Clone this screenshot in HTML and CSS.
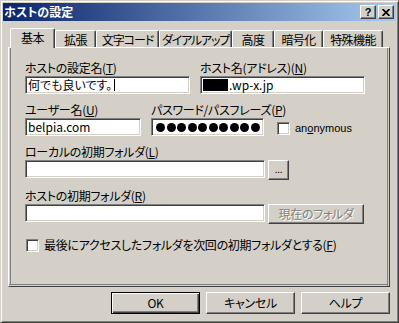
FILE: index.html
```html
<!DOCTYPE html>
<html lang="ja">
<head>
  <meta charset="UTF-8">
  <title>ホストの設定</title>
  <link rel="stylesheet" href="styles.css">
</head>
<body>

<div class="window">
  <div class="titlebar">
    <span class="title">ホストの設定</span>
    <div class="caption">
      <span class="cap-btn">?</span>
      <span class="cap-btn">
        <svg width="8" height="7" viewBox="0 0 8 7"><path d="M0.5 0 L7.5 7 M7.5 0 L0.5 7" stroke="#000" stroke-width="1.7"/></svg>
      </span>
    </div>
  </div>

  <div class="dialog">
    <!-- Tabs -->
    <div class="tabs">
      <div class="tab active">基本</div>
      <div class="tab">拡張</div>
      <div class="tab">文字コード</div>
      <div class="tab">ダイアルアップ</div>
      <div class="tab">高度</div>
      <div class="tab">暗号化</div>
      <div class="tab">特殊機能</div>
    </div>

    <div class="panel">
      <div class="row">
        <div class="field w-half">
          <label>ホストの設定名(<u>T</u>)</label>
          <div class="edit">何でも良いです。<span class="caret"></span></div>
        </div>
        <div class="field w-half gap">
          <label>ホスト名(アドレス)(<u>N</u>)</label>
          <div class="edit"><span class="masked"></span>.wp-x.jp</div>
        </div>
      </div>

      <div class="row spaced">
        <div class="field w-user">
          <label>ユーザー名(<u>U</u>)</label>
          <div class="edit">belpia.com</div>
        </div>
        <div class="field w-pass gap">
          <label>パスワード/パスフレーズ(<u>P</u>)</label>
          <div class="edit dots">
            <i></i><i></i><i></i><i></i><i></i><i></i><i></i><i></i><i></i><i></i>
          </div>
        </div>
        <div class="check anon">
          <span class="box"></span>
          <span>an<u>o</u>nymous</span>
        </div>
      </div>

      <div class="field spaced">
        <label>ローカルの初期フォルダ(<u>L</u>)</label>
        <div class="line">
          <div class="edit w-wide"></div>
          <div class="btn small">...</div>
        </div>
      </div>

      <div class="field spaced">
        <label>ホストの初期フォルダ(<u>R</u>)</label>
        <div class="line">
          <div class="edit w-wide"></div>
          <div class="btn current disabled">現在のフォルダ</div>
        </div>
      </div>

      <div class="check last">
        <span class="box"></span>
        <span>最後にアクセスしたフォルダを次回の初期フォルダとする(<u>F</u>)</span>
      </div>
    </div>

    <div class="buttons">
      <div class="btn dlg default">OK</div>
      <div class="btn dlg">キャンセル</div>
      <div class="btn dlg">ヘルプ</div>
    </div>
  </div>
</div>

</body>
</html>
```

FILE: styles.css
```css
* { margin: 0; padding: 0; box-sizing: border-box; }
body {
  font-family: "Noto Sans CJK JP", "Noto Sans", sans-serif;
  font-size: 12px;
  line-height: 14px;
  font-feature-settings: "palt";
  letter-spacing: -0.3px;
  color: #000;
  background: #d4d0c8;
  white-space: nowrap;
}

.window {
  width: 399px;
  height: 323px;
  background: #d4d0c8;
  border: 1px solid;
  border-color: #d4d0c8 #404040 #404040 #d4d0c8;
  box-shadow: inset 1px 1px #fff, inset -1px -1px #808080;
  padding: 2px;
}

/* title bar */
.titlebar {
  height: 18px;
  background: linear-gradient(to right, #0a246a, #a6caf0);
  display: flex;
  align-items: center;
  justify-content: space-between;
  padding: 0 2px 0 1px;
}
.title { color: #fff; font-weight: bold; letter-spacing: 0; }
.caption { display: flex; gap: 2px; }
.cap-btn {
  width: 16px; height: 14px;
  background: #d4d0c8;
  border: 1px solid;
  border-color: #fff #404040 #404040 #fff;
  box-shadow: inset -1px -1px #808080;
  display: flex; align-items: center; justify-content: center;
  font-family: "Liberation Sans", sans-serif;
  font-weight: bold; font-size: 11px;
}

.dialog { padding: 7px 6px 0 5px; }

/* tabs */
.tabs {
  display: flex;
  align-items: flex-end;
  height: 19px;
  padding-left: 2px;
  position: relative;
  z-index: 1;
}
.tab {
  height: 17px;
  padding-top: 2px;
  text-align: center;
  border: 1px solid;
  border-bottom: none;
  border-color: #fff #404040 #404040 #fff;
  border-radius: 2px 2px 0 0;
  box-shadow: inset -1px 0 #808080;
  background: #d4d0c8;
  letter-spacing: -0.6px;
  overflow: hidden;
}
.tab.active { height: 20px; margin-bottom: -1px; padding-top: 2px; }
.tab:nth-child(1) { width: 45px; }
.tab:nth-child(2) { width: 41px; }
.tab:nth-child(3) { width: 63px; letter-spacing: -1px; }
.tab:nth-child(4) { width: 73px; letter-spacing: -1.2px; }
.tab:nth-child(5) { width: 42px; }
.tab:nth-child(6) { width: 49px; }
.tab:nth-child(7) { width: 60px; }

.panel {
  width: 382px;
  height: 240px;
  border: 1px solid;
  border-color: #fff #404040 #404040 #fff;
  box-shadow:
    inset -1px 0 #d4d0c8, inset -2px 0 #808080,
    inset 0 -1px #d4d0c8, inset 0 -2px #808080,
    inset 1px 0 #d4d0c8, inset 2px 0 #808080;
  padding: 13px 0 0 16px;
}

/* form */
.row { display: flex; align-items: flex-end; }
.spaced { margin-top: 9px; }
.field label { display: block; height: 14px; margin-bottom: 1px; }
.gap { margin-left: 10px; }
.w-half { width: 165px; }
.w-user { width: 116px; }
.w-pass { width: 113px; }
.w-wide { width: 240px; }

.edit {
  height: 18px;
  background: #fff;
  border: 1px solid;
  border-color: #808080 #fff #fff #808080;
  box-shadow: inset 1px 1px #404040, inset -1px -1px #d4d0c8;
  padding: 0 2px;
  line-height: 16px;
  display: flex;
  align-items: center;
  letter-spacing: 0;
}
.caret { width: 1px; height: 12px; background: #000; margin-left: 2px; }
.masked { width: 25px; height: 12px; background: #000; margin-right: 1px; }
.dots { gap: 1.5px; padding-left: 4px; }
.dots i { width: 9px; height: 9px; border-radius: 50%; background: #000; }

.line { display: flex; align-items: flex-start; gap: 3px; }

.check { display: flex; align-items: center; gap: 5px; }
.box {
  width: 13px; height: 13px;
  background: #fff;
  border: 1px solid;
  border-color: #808080 #fff #fff #808080;
  box-shadow: inset 1px 1px #404040, inset -1px -1px #d4d0c8;
}
.anon { margin-left: 13px; margin-bottom: 1px; font-family: "Liberation Sans", sans-serif; font-size: 11px; letter-spacing: 0; }
.last { margin-top: 14px; margin-left: 1px; }

/* buttons */
.btn {
  background: #d4d0c8;
  border: 1px solid;
  border-color: #fff #404040 #404040 #fff;
  box-shadow: inset -1px -1px #808080;
  display: flex; align-items: center; justify-content: center;
}
.btn.small { width: 21px; height: 20px; font-size: 10px; padding-bottom: 3px; }
.btn.current { width: 96px; height: 20px; }
.btn.disabled { color: #808080; text-shadow: 1px 1px #fff; }

.buttons {
  display: flex;
  justify-content: flex-end;
  gap: 6px;
  width: 382px;
  margin-top: 5px;
}
.btn.dlg { width: 89px; height: 22px; }
.btn.default {
  border-color: #000;
  box-shadow: inset 1px 1px #fff, inset -1px -1px #404040, inset -2px -2px #808080;
}
```
